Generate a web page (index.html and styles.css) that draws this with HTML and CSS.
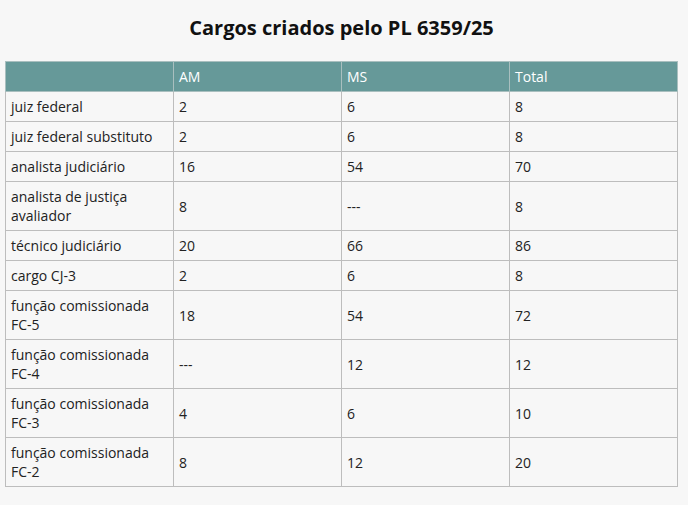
FILE: index.html
```html
<!DOCTYPE html>
<html lang="pt">
<head>
<meta charset="utf-8">
<title>Cargos criados pelo PL 6359/25</title>
<link rel="stylesheet" href="styles.css">
</head>
<body>
<h1 class="title">Cargos criados pelo PL 6359/25</h1>
<table class="data">
<thead>
<tr><th></th><th>AM</th><th>MS</th><th>Total</th></tr>
</thead>
<tbody>
<tr><td>juiz federal</td><td>2</td><td>6</td><td>8</td></tr>
<tr><td>juiz federal substituto</td><td>2</td><td>6</td><td>8</td></tr>
<tr><td>analista judiciário</td><td>16</td><td>54</td><td>70</td></tr>
<tr><td>analista de justiça avaliador</td><td>8</td><td>---</td><td>8</td></tr>
<tr><td>técnico judiciário</td><td>20</td><td>66</td><td>86</td></tr>
<tr><td>cargo CJ-3</td><td>2</td><td>6</td><td>8</td></tr>
<tr><td>função comissionada FC-5</td><td>18</td><td>54</td><td>72</td></tr>
<tr><td>função comissionada FC-4</td><td>---</td><td>12</td><td>12</td></tr>
<tr><td>função comissionada FC-3</td><td>4</td><td>6</td><td>10</td></tr>
<tr><td>função comissionada FC-2</td><td>8</td><td>12</td><td>20</td></tr>
</tbody>
</table>
</body>
</html>
```
FILE: styles.css
```css
html, body {
  margin: 0;
  background: #f7f7f7;
}
body {
  padding: 0 5px;
  font-family: "Open Sans", sans-serif;
  color: #222;
}
.title {
  margin: 0 0 14px;
  padding-top: 14px;
  height: 47px;
  box-sizing: border-box;
  width: 673px;
  text-align: center;
  font-size: 20px;
  line-height: 28px;
  font-weight: 700;
  color: #111;
}
.data {
  width: 673px;
  border-collapse: collapse;
  table-layout: fixed;
  font-size: 14px;
  line-height: 19px;
}
.data th, .data td {
  border: 1px solid #bdbdbd;
  padding: 5px 5px;
  text-align: left;
  vertical-align: middle;
}
.data th {
  background: #669999;
  color: #fff;
  font-weight: 400;
  border-color: #a9bfbf;
}
.data td {
  color: #222;
}
```
